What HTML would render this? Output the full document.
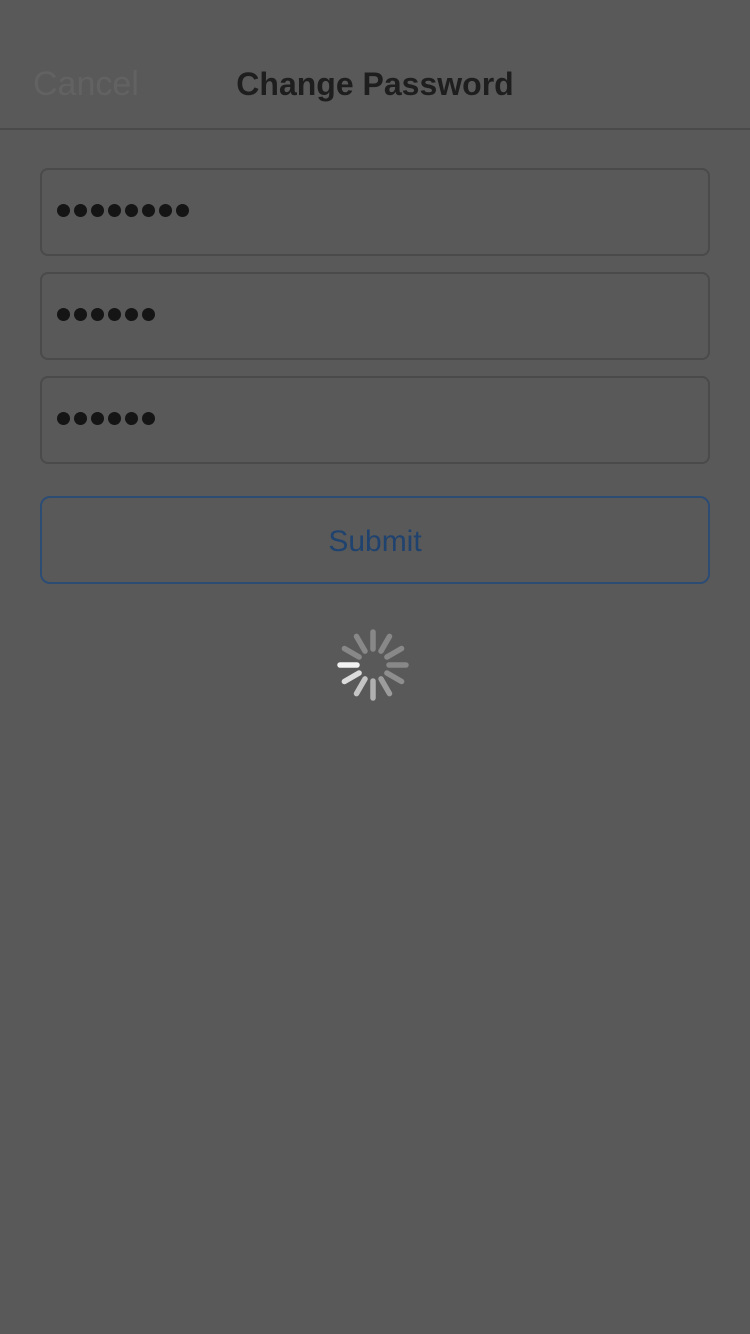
<!DOCTYPE html>
<html><head><meta charset="utf-8"><style>
body{margin:0;width:750px;height:1334px;background:#595959;font-family:"Liberation Sans",sans-serif;position:relative;overflow:hidden}
.hdr{position:absolute;left:0;top:0;width:750px;height:128px;border-bottom:2px solid #4a4a4a}
.cancel{position:absolute;left:33px;top:65px;font-size:34px;color:#626262}
.title{position:absolute;left:0;width:750px;text-align:center;top:66px;font-size:32px;color:#1e1e1e;font-weight:bold}
.inp{position:absolute;left:40px;width:666px;height:84px;border:2px solid #4a4a4a;border-radius:8px;box-sizing:content-box}
.dots{position:absolute;left:15px;top:34px;display:flex;gap:4px}
.dots i{display:block;width:13px;height:13px;border-radius:50%;background:#151515}
.btn{position:absolute;left:40px;top:496px;width:666px;height:84px;border:2px solid #2c4c74;border-radius:10px;text-align:center;line-height:88px;font-size:30px;color:#1f426e}
</style></head><body>
<div class="hdr"><div class="cancel">Cancel</div><div class="title">Change Password</div></div>
<div class="inp" style="top:168px"><div class="dots"><i></i><i></i><i></i><i></i><i></i><i></i><i></i><i></i></div></div>
<div class="inp" style="top:272px"><div class="dots"><i></i><i></i><i></i><i></i><i></i><i></i></div></div>
<div class="inp" style="top:376px"><div class="dots"><i></i><i></i><i></i><i></i><i></i><i></i></div></div>
<div class="btn">Submit</div>
<svg style="position:absolute;left:333px;top:625px" width="80" height="80" viewBox="-40 -40 80 80">
<g stroke-linecap="round" stroke-width="5.5">
<line x1="-16" y1="0" x2="-33" y2="0" stroke="#f2f2f2"/>
<line x1="-13.9" y1="8" x2="-28.6" y2="16.5" stroke="#dcdcdc"/>
<line x1="-8" y1="13.9" x2="-16.5" y2="28.6" stroke="#c4c4c4"/>
<line x1="0" y1="16" x2="0" y2="33" stroke="#b0b0b0"/>
<line x1="8" y1="13.9" x2="16.5" y2="28.6" stroke="#9c9c9c"/>
<line x1="13.9" y1="8" x2="28.6" y2="16.5" stroke="#8e8e8e"/>
<line x1="16" y1="0" x2="33" y2="0" stroke="#888"/>
<line x1="13.9" y1="-8" x2="28.6" y2="-16.5" stroke="#888"/>
<line x1="8" y1="-13.9" x2="16.5" y2="-28.6" stroke="#888"/>
<line x1="0" y1="-16" x2="0" y2="-33" stroke="#888"/>
<line x1="-8" y1="-13.9" x2="-16.5" y2="-28.6" stroke="#888"/>
<line x1="-13.9" y1="-8" x2="-28.6" y2="-16.5" stroke="#888"/>
</g></svg>
</body></html>
